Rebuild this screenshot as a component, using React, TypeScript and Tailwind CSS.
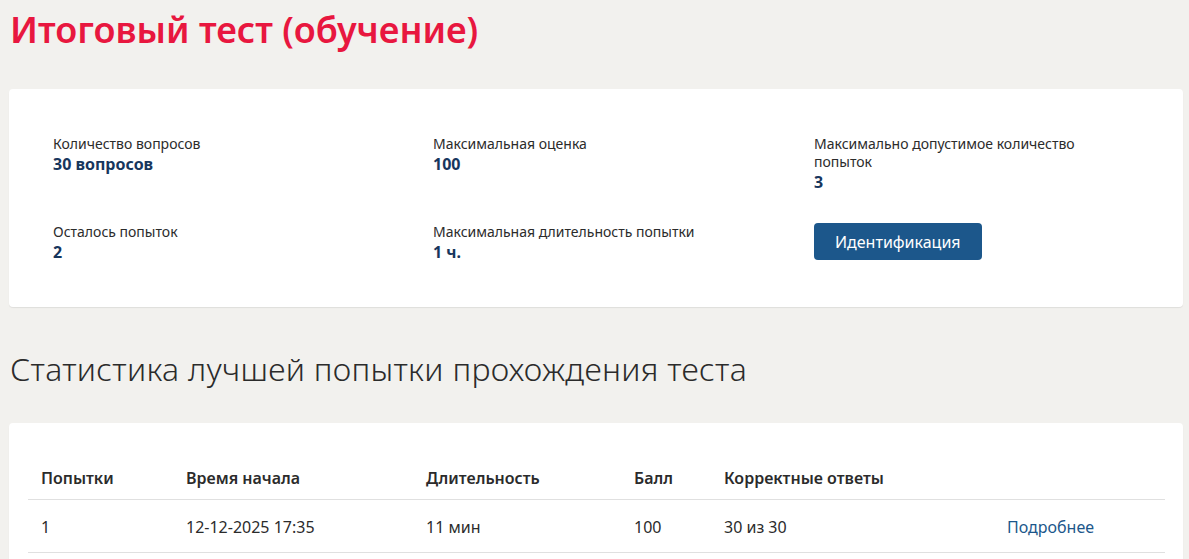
import React from 'react';

const body = { fontFamily: '"Noto Sans", "Open Sans", sans-serif' };

interface Info {
  label: string;
  value: string;
}

function Field({ label, value }: Info) {
  return (
    <div>
      <div className="text-[14px] leading-[18px] text-[#2b2b2b]">{label}</div>
      <div className="text-[16px] leading-[22px] font-bold text-[#17365d]">{value}</div>
    </div>
  );
}

const attempts = [
  { n: '1', start: '12-12-2025 17:35', dur: '11 мин', score: '100', correct: '30 из 30' },
];

export default function App() {
  return (
    <div className="min-h-screen bg-[#f2f1ee] pl-[9px] pr-[6px] pt-[6px] pb-8" style={body}>
      <h1 className="text-[36px] leading-[48px] font-semibold text-[#e8173f] pl-[1px]">
        Итоговый тест (обучение)
      </h1>

      <div className="mt-[35px] bg-white rounded-[4px] shadow-[0_1px_1px_rgba(0,0,0,0.08)] pl-[44px] pt-[46px] pb-[44px]">
        <div className="grid grid-cols-[380px_381px_330px] gap-y-[30px]">
          <Field label="Количество вопросов" value="30 вопросов" />
          <Field label="Максимальная оценка" value="100" />
          <div>
            <div className="text-[14px] leading-[18px] text-[#2b2b2b]">
              Максимально допустимое количество
              <br />
              попыток
            </div>
            <div className="text-[16px] leading-[22px] font-bold text-[#17365d]">3</div>
          </div>
          <Field label="Осталось попыток" value="2" />
          <Field label="Максимальная длительность попытки" value="1 ч." />
          <div>
            <button className="h-[37px] px-[21px] rounded-[4px] bg-[#1c578b] text-white text-[16px]">
              Идентификация
            </button>
          </div>
        </div>
      </div>

      <h2 className="mt-[42px] text-[32px] leading-[40px] font-light tracking-[0.3px] text-[#2b2b2b] pl-[1px]">
        Статистика лучшей попытки прохождения теста
      </h2>

      <div className="mt-[34px] bg-white rounded-[4px] shadow-[0_1px_1px_rgba(0,0,0,0.08)] pl-[19px] pr-[18px] pt-[34px] pb-[20px]">
        <table className="w-full text-left text-[16px] text-[#2b2b2b]">
          <thead>
            <tr className="border-b border-[#e0e0e0]">
              <th className="font-semibold pl-[13px] py-[9px] w-[158px]">Попытки</th>
              <th className="font-semibold w-[240px]">Время начала</th>
              <th className="font-semibold w-[208px]">Длительность</th>
              <th className="font-semibold w-[90px]">Балл</th>
              <th className="font-semibold w-[283px]">Корректные ответы</th>
              <th></th>
            </tr>
          </thead>
          <tbody>
            {attempts.map(a => (
              <tr key={a.n} className="border-b border-[#e0e0e0]">
                <td className="pl-[13px] pt-[15px] pb-[13px]">{a.n}</td>
                <td className="pt-[15px] pb-[13px]">{a.start}</td>
                <td className="pt-[15px] pb-[13px]">{a.dur}</td>
                <td className="pt-[15px] pb-[13px]">{a.score}</td>
                <td className="pt-[15px] pb-[13px]">{a.correct}</td>
                <td className="pt-[15px] pb-[13px]">
                  <a href="#" className="text-[#1c578b]">Подробнее</a>
                </td>
              </tr>
            ))}
          </tbody>
        </table>
      </div>
    </div>
  );
}
